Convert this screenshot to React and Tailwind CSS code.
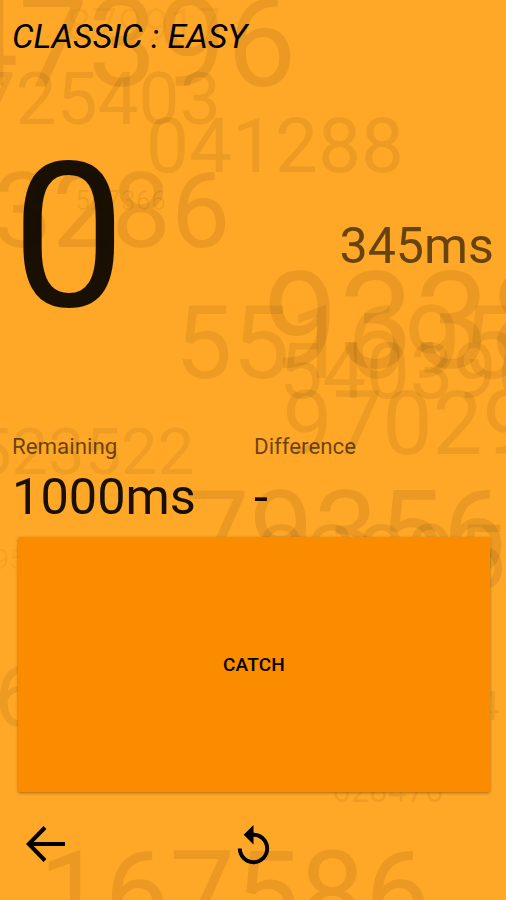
import React from "react";

// x is the left edge of the first digit, y is the baseline
const NUMBERS = [
  { value: "47396", x: -51, y: 86, size: 123.5, opacity: 0.08 },
  { value: "879917", x: 66, y: 41, size: 46, opacity: 0.03 },
  { value: "725403", x: -25.5, y: 124, size: 73, opacity: 0.07 },
  { value: "041288", x: 146, y: 171.5, size: 76.5, opacity: 0.07 },
  { value: "3286", x: -7, y: 247, size: 105.5, opacity: 0.08 },
  { value: "527366", x: 75, y: 209.5, size: 27, opacity: 0.06 },
  { value: "93389", x: 263, y: 368, size: 134.5, opacity: 0.08 },
  { value: "551695", x: 175, y: 378, size: 102, opacity: 0.07 },
  { value: "540396", x: 279, y: 397.5, size: 77.5, opacity: 0.07 },
  { value: "97029", x: 282.5, y: 453.5, size: 89, opacity: 0.07 },
  { value: "523522", x: -25, y: 473.5, size: 65, opacity: 0.06 },
  { value: "79356", x: 185, y: 571.5, size: 114.5, opacity: 0.08 },
  { value: "32895", x: 257, y: 587.5, size: 88.5, opacity: 0.08 },
  { value: "95", x: -6, y: 568.5, size: 27, opacity: 0.05 },
  { value: "6", x: -6, y: 726, size: 88, opacity: 0.07 },
  { value: "4", x: 477, y: 720, size: 40, opacity: 0.08 },
  { value: "628476", x: 332, y: 801.5, size: 33, opacity: 0.07 },
  { value: "167586", x: 39, y: 934, size: 116, opacity: 0.08 },
];

function FloatingNumbers() {
  return (
    <svg
      className="absolute inset-0 -z-10 h-full w-full"
      viewBox="0 0 506 900"
      aria-hidden="true"
    >
      {NUMBERS.map((n) => (
        <text
          key={n.value}
          x={n.x}
          y={n.y}
          fontSize={n.size}
          fillOpacity={n.opacity}
        >
          {n.value}
        </text>
      ))}
    </svg>
  );
}

function Stat({ label, value }) {
  return (
    <div className="flex flex-col">
      <span className="text-[22.3px] leading-7 text-black/60">{label}</span>
      <span className="mt-[7px] text-[50.5px] leading-[60px] text-black/90">
        {value}
      </span>
    </div>
  );
}

export default function App() {
  return (
    <main className="relative isolate flex h-[900px] w-[506px] flex-col overflow-hidden bg-[#ffa726] font-[Roboto,sans-serif] text-black">
      <FloatingNumbers />

      <h1 className="pt-4 pl-3 text-[34px] leading-10 italic">
        CLASSIC : EASY
      </h1>

      <div className="mt-[59px] flex h-[244px] items-center justify-between px-3">
        <span className="text-[202px] leading-none text-black/90">0</span>
        <span className="mt-[18px] text-[50.2px] leading-none text-black/60">
          345ms
        </span>
      </div>

      <div className="mt-[73px] grid grid-cols-[242px_1fr] pl-3">
        <Stat label="Remaining" value="1000ms" />
        <Stat label="Difference" value="-" />
      </div>

      <button className="mr-4 ml-[18px] mt-[10px] h-[255px] rounded-xs bg-[#fb8c00] pt-px text-[19px] font-medium tracking-[0.2px] shadow-[0_1px_3px_rgba(0,0,0,0.35)]">
        CATCH
      </button>

      <nav className="grid grid-cols-3 items-start pt-[31px]">
        <button className="mt-[3px] ml-[26px] h-9 w-10" aria-label="Back">
          <svg
            viewBox="0 0 40 36"
            className="h-full w-full"
            fill="none"
            stroke="black"
            strokeWidth="4"
          >
            <path d="M19 1.500 2.800 18 19 34.500M2.500 18H39" />
          </svg>
        </button>
        <button
          className="ml-0.5 size-[47px] justify-self-center"
          aria-label="Restart"
        >
          <svg viewBox="0 0 24 24" className="h-full w-full" fill="black">
            <path d="M12 5V1L7 6l5 5V7c3.310 0 6 2.690 6 6s-2.690 6-6 6-6-2.690-6-6H4c0 4.420 3.580 8 8 8s8-3.580 8-8-3.580-8-8-8z" />
          </svg>
        </button>
      </nav>
    </main>
  );
}
